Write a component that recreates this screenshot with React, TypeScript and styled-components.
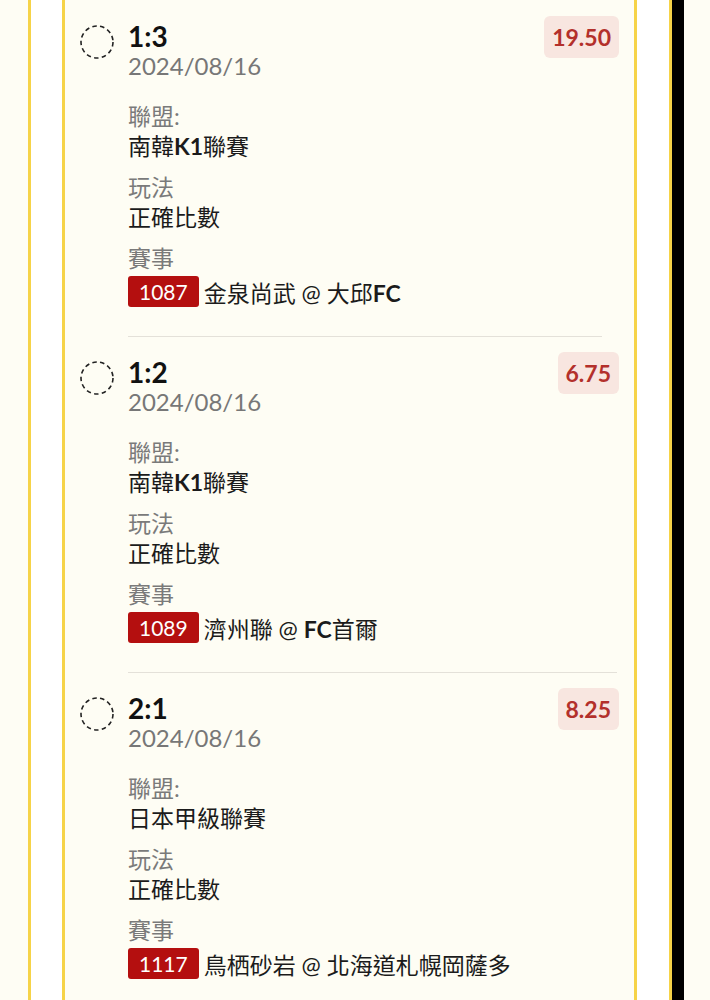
import React from 'react';
import styled, {createGlobalStyle} from 'styled-components';

const GlobalStyle = createGlobalStyle`
  body {
    margin: 0;
    background: #fefdf4;
    font-family: Lato, "Noto Sans CJK TC", sans-serif;
  }
`;

const Page = styled.div`
  padding-left: 28px;
`;

const Frame = styled.div`
  width: 575px;
  padding: 0 32px 0 31px;
  background: #ffffff;
  border-left: 3px solid #f6d348;
  border-right: 3px solid #f6d348;
  box-shadow: 12px 0 0 #000000;
`;

const Panel = styled.div`
  padding: 1px 15px 0 15px;
  background: #fefdf4;
  border-left: 3px solid #f6d348;
  border-right: 3px solid #f6d348;
`;

const Item = styled.div`
  padding-top: 15px;
`;

const Header = styled.div`
  display: flex;
  align-items: flex-start;
`;

const Marker = styled.svg`
  flex: none;
  margin-top: 9px;
`;

const Info = styled.div`
  flex: 1;
  margin: 5px 0 0 14px;
`;

const Score = styled.div`
  height: 30px;
  font-size: 28px;
  font-weight: 700;
  line-height: 30px;
  color: #111111;
`;

const DateText = styled.div`
  height: 30px;
  font-size: 24px;
  line-height: 30px;
  color: #777777;
`;

const Odds = styled.div`
  display: flex;
  align-items: center;
  height: 42px;
  padding: 0 8px;
  border-radius: 6px;
  background: #f8e6e0;
  color: #b3302b;
  font-size: 23px;
  font-weight: 700;
`;

const Fields = styled.div`
  display: flex;
  flex-direction: column;
  gap: 11px;
  margin: 20px 0 0 48px;
`;

const Label = styled.div`
  height: 30px;
  font-size: 23px;
  line-height: 30px;
  color: #7a7a7a;
`;

const Value = styled.div`
  height: 30px;
  font-size: 23px;
  line-height: 30px;
  color: #1b1b1b;
  white-space: nowrap;
`;

const Latin = styled.span`
  font-weight: 700;
`;

const MatchRow = styled.div`
  display: flex;
  align-items: center;
  gap: 5px;
  height: 37px;
  font-size: 23px;
  color: #1b1b1b;
  white-space: nowrap;
`;

const Code = styled.span`
  display: flex;
  align-items: center;
  height: 31px;
  padding: 0 11px;
  border-radius: 3px;
  background: #b40f0f;
  color: #ffffff;
  font-size: 21px;
`;

const Divider = styled.div<{ $inset: number }>`
  height: 1px;
  margin: 26px ${p => p.$inset}px 0 48px;
  background: #e4e1d9;
`;

// mixes CJK text with bold latin runs like "K1" / "FC"
const mixed = (text: string) =>
    text.split(/([A-Za-z0-9]+)/).map((part, i) =>
        /^[A-Za-z0-9]+$/.test(part) ? <Latin key={i}>{part}</Latin> : part
    );

const bets = [
    {score: '1:3', date: '2024/08/16', odds: '19.50', league: '南韓K1聯賽', play: '正確比數', code: '1087', match: '金泉尚武 @ 大邱FC', inset: 17},
    {score: '1:2', date: '2024/08/16', odds: '6.75', league: '南韓K1聯賽', play: '正確比數', code: '1089', match: '濟州聯 @ FC首爾', inset: 2},
    {score: '2:1', date: '2024/08/16', odds: '8.25', league: '日本甲級聯賽', play: '正確比數', code: '1117', match: '鳥栖砂岩 @ 北海道札幌岡薩多', inset: 2},
];

const App = () => {
    return <>
        <GlobalStyle/>
        <Page>
            <Frame>
                <Panel>
                    {bets.map(bet =>
                        <Item key={bet.code}>
                            <Header>
                                <Marker width="34" height="34" viewBox="0 0 34 34">
                                    <circle cx="17" cy="17" r="16" fill="none" stroke="#222" strokeWidth="1.6"
                                            strokeDasharray="4.5 3.3"/>
                                </Marker>
                                <Info>
                                    <Score>{bet.score}</Score>
                                    <DateText>{bet.date}</DateText>
                                </Info>
                                <Odds>{bet.odds}</Odds>
                            </Header>
                            <Fields>
                                <div>
                                    <Label>聯盟:</Label>
                                    <Value>{mixed(bet.league)}</Value>
                                </div>
                                <div>
                                    <Label>玩法</Label>
                                    <Value>{bet.play}</Value>
                                </div>
                                <div>
                                    <Label>賽事</Label>
                                    <MatchRow>
                                        <Code>{bet.code}</Code>
                                        <span>{mixed(bet.match)}</span>
                                    </MatchRow>
                                </div>
                            </Fields>
                            <Divider $inset={bet.inset}/>
                        </Item>
                    )}
                </Panel>
            </Frame>
        </Page>
    </>;
};

export default App;
